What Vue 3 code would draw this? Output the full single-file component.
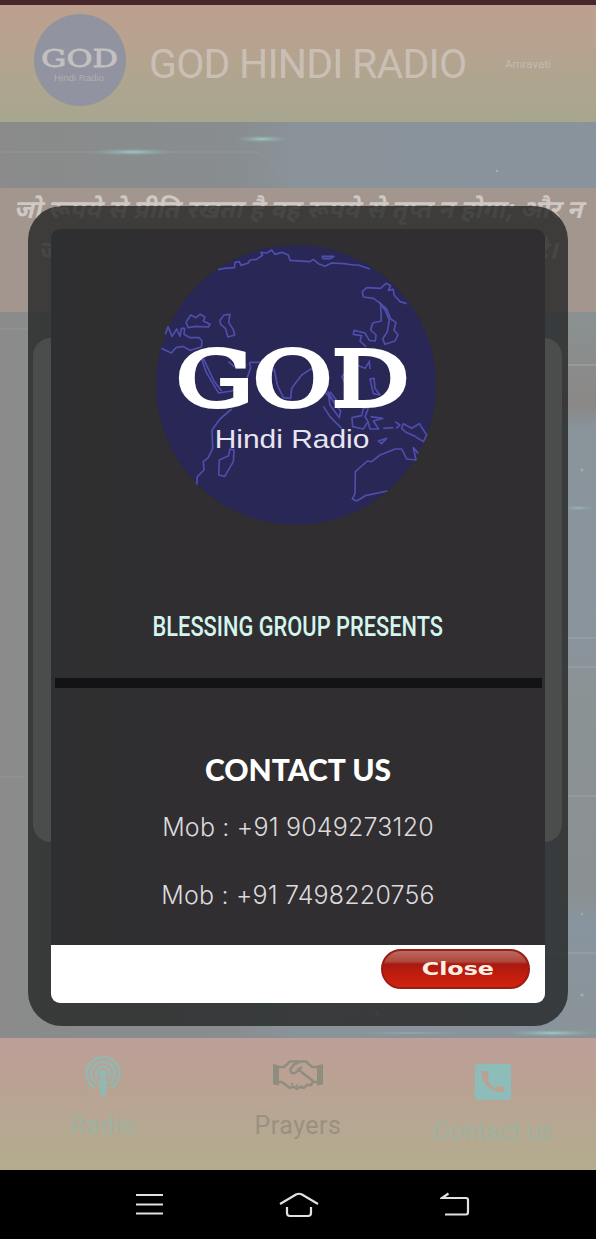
<template>
  <div class="screen">
    <svg class="backdrop" viewBox="0 0 596 1239" aria-hidden="true">
      <defs>
        <linearGradient id="sky" x1="0" x2="1">
          <stop offset="0" stop-color="#8a8b8a" />
          <stop offset="0.4" stop-color="#888d90" />
          <stop offset="0.5" stop-color="#8a939a" />
          <stop offset="1" stop-color="#89939b" />
        </linearGradient>
        <radialGradient id="flare">
          <stop offset="0" stop-color="#9fcac6" />
          <stop offset="0.45" stop-color="#93b0af" stop-opacity="0.6" />
          <stop offset="1" stop-color="#8b9396" stop-opacity="0" />
        </radialGradient>
        <linearGradient id="edge" x1="0" y1="0" x2="0" y2="1">
          <stop offset="0" stop-color="#8a9191" />
          <stop offset="0.13" stop-color="#8b8887" />
          <stop offset="0.16" stop-color="#89949b" />
          <stop offset="0.45" stop-color="#8a949c" />
          <stop offset="0.55" stop-color="#8b9293" />
          <stop offset="0.8" stop-color="#8b9192" />
          <stop offset="0.84" stop-color="#88949e" />
          <stop offset="1" stop-color="#8a9398" />
        </linearGradient>
      </defs>
      <rect width="596" height="1239" fill="url(#sky)" />
      <rect x="560" y="312" width="36" height="726" fill="url(#edge)" />
      <path d="M0 152H258L292 187" class="trace" />
      <path d="M560 365H596M560 638H596M560 667H596M560 796H596M545 953H596" class="trace bright" />
      <path d="M0 329H30M0 777H24M575 605L596 612M575 120L596 134" class="trace" />
      <ellipse cx="133" cy="152" rx="48" ry="4" fill="url(#flare)" />
      <ellipse cx="262" cy="139" rx="30" ry="4" fill="url(#flare)" />
      <ellipse cx="578" cy="508" rx="18" ry="3" fill="url(#flare)" opacity="0.7" />
      <ellipse cx="552" cy="1033" rx="55" ry="4" fill="url(#flare)" />
      <ellipse cx="410" cy="1033" rx="70" ry="2" fill="url(#flare)" opacity="0.5" />
      <circle cx="582" cy="470" r="1.5" class="dot" />
      <circle cx="497" cy="171" r="1.2" class="dot" />
      <circle cx="582" cy="914" r="1.2" class="dot" />
      <circle cx="582" cy="995" r="1.5" class="dot" />
      <circle cx="377" cy="1013" r="1.8" class="dot" />
    </svg>

    <div class="statusbar"></div>

    <header class="header">
      <svg class="brand" viewBox="0 0 92 92">
        <circle cx="46" cy="46" r="46" />
        <text x="7" y="53" textLength="77" lengthAdjust="spacingAndGlyphs" class="brand-god">GOD</text>
        <text x="20" y="67" textLength="50" lengthAdjust="spacingAndGlyphs" class="brand-sub">Hindi Radio</text>
      </svg>
      <h1>GOD HINDI RADIO</h1>
      <span class="city">Amravati</span>
    </header>

    <div class="banner"></div>

    <div class="verse">
      <p>जो रूपये से प्रीति रखता है वह रूपये से तृप्त न होगा; और न</p>
      <p>जो बहुत धन से प्रीति रखता है, लाभ से यह भी व्यर्थ है।</p>
    </div>

    <main class="stage">
      <div class="player"></div>
    </main>

    <nav class="tabs">
      <a v-for="tab in tabs" :key="tab.name" class="tab" :class="tab.name">
        <svg v-if="tab.name === 'radio'" width="36" height="40" viewBox="0 0 36 40">
          <path d="M10 32A16.5 16.5 0 1 1 26 32" class="line" />
          <path d="M11.5 27.5A11.8 11.8 0 1 1 24.5 27.5" class="line" />
          <path d="M13 22.5A7 7 0 1 1 23 22.5" class="line" />
          <circle cx="18" cy="18" r="4.2" />
          <path d="M13.5 26Q13.5 23 18 23T22.5 26L21 37Q20.5 40 18 40T15 37Z" />
        </svg>
        <svg v-else-if="tab.name === 'prayers'" width="50" height="30" viewBox="0 0 50 30">
          <path d="M0 4L6 5.5V25.5L0 24.5ZM50 4L44 5.5V25.5L50 24.5Z" />
          <path d="M6 7H11L17 1.5H33L39 7H44M6 22H9L17 28L20 26.5L24 29L27 27L31 28L34 25L38 25L40 22H44" class="line" />
          <path d="M27 2L21 4.500L17.500 9Q17 14 22 13L26 10L31 14L40 21M24 10L29 7" class="line" />
          <path d="M18 25L20 23M23 27L25 24M28 27L29 25" class="line thin" />
        </svg>
        <svg v-else width="36" height="36" viewBox="0 0 36 36">
          <path fill-rule="evenodd" d="M3 0H33Q36 0 36 3V33Q36 36 33 36H3Q0 36 0 33V3Q0 0 3 0ZM6.500 7Q6 15 11 21Q17 28 27 28.500L29 27V23L23 21.500L20 24Q15 21 12.500 16L14 13L12.500 7Z" />
        </svg>
        <span>{{ tab.label }}</span>
      </a>
    </nav>

    <footer class="sysnav">
      <svg width="28" height="24" viewBox="0 0 28 24"><path d="M0 3H27M0 12.5H27M0 21.5H27" /></svg>
      <svg width="40" height="26" viewBox="0 0 40 26"><path d="M1 12L17 2.5Q20 1 23 2.5L39 12M8 15V21Q8 24 11 24H29Q32 24 32 21V15" /></svg>
      <svg width="30" height="24" viewBox="0 0 30 24"><path d="M8.5 1.5L2 6H26Q28 6 28 8V20Q28 22.5 26 22.5H5" /></svg>
    </footer>

    <div class="dialog">
      <div class="sheet">
        <section class="about">
          <svg class="globe" viewBox="48 30 840 840">
            <circle cx="468" cy="450" r="420" fill="#282755" />
            <g class="coast">
              <path d="M234 104L252 100L283 98L285 82L298 80L303 91L325 84L330 75L350 73L368 60L362 52L380 54L395 45L405 58L425 52L445 60L450 76L510 80L520 73L535 86L555 94L575 84L612 86L640 90L655 90L690 102" />
              <path d="M545 64H582L570 71H550L545 64" />
              <path d="M670 186L667 170L680 158L722 160L738 145L752 152L745 166L760 163L762 180L780 200L800 206M670 186L700 190L722 205L724 258L698 264L692 285L708 300L706 318L688 316L675 294L642 286L640 298L665 302L660 318L678 335" />
              <path d="M718 203L735 225L748 255L742 290L728 312L735 328L765 318L774 300L762 285L768 262L752 252L740 222Z" />
              <path d="M138 262L152 240L168 248L180 238L195 246L190 258L210 268L205 276L165 274L145 278Z" />
              <path d="M240 256L252 240L270 238L266 262L280 284L284 300L264 306L256 280L242 268Z" />
              <path d="M76 298L84 275L96 304L110 282L120 304L124 280L134 280L132 298L150 308L178 308L186 318L184 336L150 346L128 334L108 338L94 354L64 340" />
              <path d="M184 370L198 410L215 440L236 474L275 468L318 438L332 398L328 382M190 370L204 400L222 438L245 468M328 382H368M265 380L282 394L320 390" />
              <path d="M402 400L412 450L430 488L452 490L455 460L485 420L515 400L535 420L550 466L580 498M570 470L600 510" />
              <path d="M275 522L240 552L216 585L218 640L205 668L190 680L192 705L172 725L170 748" />
              <path d="M282 645L280 680L254 724L236 720L238 675L266 662L270 642Z" />
              <path d="M690 376L675 400L650 390L620 405L606 425L615 445L630 448M688 382L690 402M690 432L702 430L705 460L720 480L700 476Z" />
              <path d="M550 514L570 545L605 580M564 470L570 510L598 548L602 528L580 500Z" />
              <path d="M690 515L670 520L665 542L636 548L638 575L670 582L684 560L675 545L685 520" />
              <path d="M692 545L728 550L700 558L716 582L690 582L684 560M730 580L760 578M765 560L780 570L768 580M715 618L740 610L725 626Z" />
              <path d="M790 566L815 580L838 566L860 600L850 620L825 604L798 592L785 580Z" />
              <path d="M835 655L820 638L828 675L800 672L785 642L766 642L720 660L695 680L682 678L646 710L645 775L637 792L650 798L676 782L742 768" />
            </g>
            <text x="108" y="514" textLength="700" lengthAdjust="spacingAndGlyphs" class="god">GOD</text>
            <text x="224" y="638" textLength="464" lengthAdjust="spacingAndGlyphs" class="sub">Hindi Radio</text>
          </svg>
          <p class="presents"><span>BLESSING GROUP PRESENTS</span></p>
          <hr />
          <h2>CONTACT US</h2>
          <p v-for="phone in phones" :key="phone" class="phone">Mob : {{ phone }}</p>
        </section>
        <div class="actions">
          <button type="button"><span>Close</span></button>
        </div>
      </div>
    </div>
  </div>
</template>

<script setup>
const phones = ['+91 9049273120', '+91 7498220756']

const tabs = [
  { name: 'radio', label: 'Radio' },
  { name: 'prayers', label: 'Prayers' },
  { name: 'contact', label: 'Contact us' }
]
</script>

<style>
body {
  margin: 0;
  background: #8b8f92;
}
</style>

<style scoped>
* {
  box-sizing: border-box;
}
h1, h2, p {
  margin: 0;
}
.screen {
  position: relative;
  display: flex;
  flex-direction: column;
  width: 596px;
  height: 1239px;
  overflow: hidden;
  font-family: Roboto, "Noto Sans", sans-serif;
}
.screen > * {
  flex: none;
}
.backdrop {
  position: absolute;
  inset: 0;
  z-index: -1;
}
.trace {
  fill: none;
  stroke: #909798;
  stroke-width: 1;
}
.bright {
  stroke: #95a0a4;
  stroke-width: 1.5;
}
.dot {
  fill: #a5afb3;
}
.statusbar {
  height: 5px;
  background: #48262d;
}
.header {
  display: flex;
  align-items: center;
  height: 117px;
  padding-left: 34px;
  background: linear-gradient(#bda08f, #b7a38f 35%, #afa58f 65%, #a7a68f);
}
.brand {
  width: 92px;
  height: 92px;
  margin-bottom: 7px;
  fill: #9293a0;
}
.brand-god {
  font: 25px "DejaVu Serif", serif;
  fill: #c2c0c0;
  stroke: #c2c0c0;
  stroke-width: 0.8;
}
.brand-sub {
  font: 9px "Liberation Sans", sans-serif;
  fill: #b0aeb5;
}
h1 {
  width: 318px;
  margin-left: 23px;
  font-size: 41px;
  font-weight: 400;
  letter-spacing: -0.8px;
  white-space: nowrap;
  color: #c9bfb5;
}
.city {
  margin-left: 38px;
  font-size: 11.5px;
  color: #c5bbaf;
}
.banner {
  height: 66px;
}
.verse {
  height: 124px;
  padding-top: 3px;
  background: #a2968f;
  color: #cec9c4;
  font: italic bold 25.4px/41px "Noto Sans Devanagari", "Noto Sans", sans-serif;
  text-align: center;
  white-space: nowrap;
}
.stage {
  height: 726px;
  padding: 26px 34px 0 33px;
}
.player {
  height: 504px;
  border-radius: 18px;
  background: #e4e3e6;
}
.tabs {
  display: flex;
  height: 132px;
  padding: 0 2px 0 3px;
  background: linear-gradient(#bd9f97, #baa293 35%, #b6a792 65%, #b3ac8d);
}
.tab {
  display: flex;
  flex-direction: column;
  align-items: center;
  width: 200px;
  padding-top: 18px;
  font-size: 25px;
  line-height: 30px;
  color: #9eb19f;
}
.tab svg {
  fill: #8fb9b2;
}
.tab .line {
  fill: none;
  stroke: #8fb9b2;
  stroke-width: 2.4;
}
.tab span {
  margin-top: 15px;
}
.radio {
  letter-spacing: 0.6px;
}
.prayers {
  width: 190px;
  padding-top: 22px;
  color: #9b9080;
  letter-spacing: 0.5px;
}
.prayers svg {
  fill: #8f8d80;
}
.prayers span {
  margin-top: 21px;
}
.prayers .line {
  stroke: #8f8d80;
}
.prayers .thin {
  stroke-width: 1.5;
}
.contact {
  padding-top: 26px;
}
.contact svg {
  fill: #8ebcb9;
}
.contact span {
  margin-top: 17px;
}
.sysnav {
  display: flex;
  height: 69px;
  padding: 22px 0 0 136px;
  background: #000;
}
.sysnav svg {
  fill: none;
  stroke: #e2e0e2;
  stroke-width: 2.2;
}
.sysnav svg:nth-child(2) {
  margin-left: 115px;
}
.sysnav svg:nth-child(3) {
  margin-left: 121px;
}
.dialog {
  position: absolute;
  top: 206px;
  left: 28px;
  width: 540px;
  height: 820px;
  padding: 23px;
  border-radius: 34px;
  background: rgba(36, 37, 38, 0.8);
}
.sheet {
  width: 494px;
  height: 774px;
  border-radius: 9px;
  overflow: hidden;
}
.about {
  height: 716px;
  padding-top: 16px;
  background: linear-gradient(90deg, #2e2f30, #302e30 25%, #302e30);
  text-align: center;
}
.globe {
  display: block;
  width: 280px;
  height: 280px;
  margin-left: 105px;
}
.coast {
  fill: none;
  stroke: #504eac;
  stroke-width: 5;
  stroke-linejoin: round;
}
.god {
  font: 228px "DejaVu Serif", serif;
  fill: #fff;
  stroke: #fff;
  stroke-width: 12;
}
.sub {
  font: 76px "Liberation Sans", sans-serif;
  fill: #e8e4f0;
}
.presents {
  margin-top: 86px;
  font-size: 27px;
  font-weight: 500;
  line-height: 32px;
  white-space: nowrap;
  color: #d3f5ee;
}
.presents span {
  display: inline-block;
  transform: scaleX(0.808);
}
hr {
  height: 10px;
  margin: 35px 3px 0 4px;
  border: 0;
  background: #131214;
}
h2 {
  margin-top: 61px;
  font: 900 30px/40px Lato, sans-serif;
  color: #fff;
}
.phone {
  margin-top: 18px;
  font: 300 25px/40px Inter, sans-serif;
  letter-spacing: 0.2px;
  color: #dcdadc;
}
.phone + .phone {
  margin-top: 28px;
}
.actions {
  display: flex;
  justify-content: flex-end;
  height: 58px;
  padding: 4px 15px;
  background: #fff;
}
button {
  width: 149px;
  height: 40px;
  padding: 0 0 1px 5px;
  border: 2px solid #9c1d16;
  border-radius: 20px;
  background: linear-gradient(#b96a62, #b1463c 30%, #a81a10 36%, #c01c0c 65%, #d02410);
  font: bold 17px "DejaVu Sans", sans-serif;
  color: #fbeee4;
}
button span {
  display: inline-block;
  transform: scaleX(1.4);
}
</style>
